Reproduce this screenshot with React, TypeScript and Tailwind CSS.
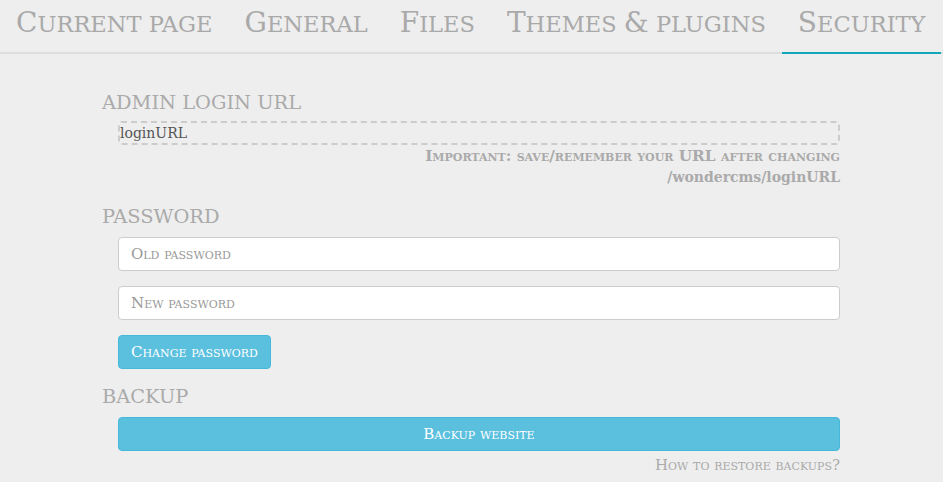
const serif = { fontFamily: '"DejaVu Serif", serif' }

const tabs = ['Current page', 'General', 'Files', 'Themes & plugins', 'Security']

// small caps drawn by hand: lowercase runs become uppercase at a reduced size
function SmallCaps({ text }: { text: string }) {
  return (
    <>
      {text.split(/([a-z ]+)/).map((part, i) =>
        /^[a-z ]+$/.test(part) ? (
          <span key={i} className="text-[0.805em] uppercase">
            {part}
          </span>
        ) : (
          <span key={i}>{part}</span>
        )
      )}
    </>
  )
}

export default function App() {
  return (
    <div className="min-h-[482px] w-[943px] overflow-hidden bg-[#eeeeee] font-['DejaVu_Serif',serif]" style={serif}>
      {/* Tabs */}
      <div className="flex border-b-2 border-[#dddddd]">
        {tabs.map((t) => (
          <div
            key={t}
            className={
              t === 'Security'
                ? '-mb-[2px] shrink-0 whitespace-nowrap border-b-2 border-[#11a7bb] px-4 pt-[3px] pb-[8px] text-[28px] leading-[40px] text-[#a9a9a9]'
                : '-mb-[2px] shrink-0 whitespace-nowrap border-b-2 border-transparent px-4 pt-[3px] pb-[8px] text-[28px] leading-[40px] text-[#a9a9a9]'
            }
          >
            <SmallCaps text={t} />
          </div>
        ))}
      </div>

      <div className="pl-[102px] pr-[103px] pt-[36px]">
        {/* Admin login URL */}
        <h3 className="text-[19.4px] leading-[26px] text-[#aaaaaa]">ADMIN LOGIN URL</h3>
        <div className="ml-4 mt-[5px] flex h-[24px] items-center rounded-[3px] border-2 border-dashed border-[#cccccc] text-[14px] text-[#555555]">
          loginURL
        </div>
        <div className="ml-4 mt-[1px] text-right font-bold text-[#aaaaaa]">
          <div className="text-[15.3px] leading-[21px] [font-variant:small-caps]">
            Important: save/remember your URL after changing
          </div>
          <div className="text-[14px] leading-[21px]">/wondercms/loginURL</div>
        </div>

        {/* Password */}
        <h3 className="mt-[16px] text-[19.4px] leading-[26px] text-[#aaaaaa]">PASSWORD</h3>
        <div className="ml-4 mt-[7px] flex flex-col gap-[15px]">
          <input
            placeholder="Old password"
            className="h-[34px] rounded-[4px] border border-[#cccccc] bg-white px-3 text-[15px] text-[#555555] placeholder:text-[#999999] [font-variant:small-caps]"
          />
          <input
            placeholder="New password"
            className="h-[34px] rounded-[4px] border border-[#cccccc] bg-white px-3 text-[15px] text-[#555555] placeholder:text-[#999999] [font-variant:small-caps]"
          />
          <div>
            <button className="h-[34px] rounded-[4px] border border-[#46b8da] bg-[#5bc0de] px-3 text-[15px] text-white [font-variant:small-caps]">
              Change password
            </button>
          </div>
        </div>

        {/* Backup */}
        <h3 className="mt-[15px] text-[19.4px] leading-[26px] text-[#aaaaaa]">BACKUP</h3>
        <div className="ml-4 mt-[7px]">
          <button className="h-[34px] w-full rounded-[4px] border border-[#46b8da] bg-[#5bc0de] text-[15px] text-white [font-variant:small-caps]">
            Backup website
          </button>
          <div className="mt-[3px] text-right text-[15px] text-[#aaaaaa] [font-variant:small-caps]">
            How to restore backups?
          </div>
        </div>
      </div>
    </div>
  )
}
